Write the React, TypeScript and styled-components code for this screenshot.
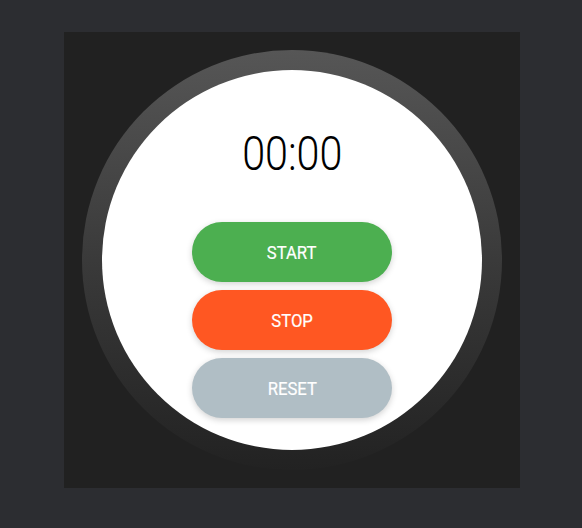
import React from "react";
import styled, { createGlobalStyle } from "styled-components";

const Global = createGlobalStyle`
  html, body { margin: 0; padding: 0; background: #2c2d31; }
  body { font-family: Roboto, "Liberation Sans", sans-serif; }
`;

const Page = styled.div`
  width: 582px;
  height: 528px;
  padding: 32px 0 0 64px;
  box-sizing: border-box;
`;

const Stage = styled.div`
  width: 456px;
  height: 456px;
  background: #212121;
  display: flex;
  align-items: center;
  justify-content: center;
`;

const Ring = styled.div`
  width: 420px;
  height: 420px;
  border-radius: 50%;
  background: linear-gradient(to bottom, #565656 0%, #3a3a3a 50%, #222222 100%);
  display: flex;
  align-items: center;
  justify-content: center;
`;

const Face = styled.div`
  width: 380px;
  height: 380px;
  border-radius: 50%;
  background: #ffffff;
  display: flex;
  flex-direction: column;
  align-items: center;
  box-sizing: border-box;
  padding-top: 56px;
`;

const Time = styled.div`
  font-family: Roboto, sans-serif;
  font-weight: 300;
  font-size: 48px;
  line-height: 56px;
  color: #000;
  transform: scaleX(0.86);
  margin-bottom: 40px;
`;

const Buttons = styled.div`
  display: flex;
  flex-direction: column;
  gap: 8px;
`;

const Btn = styled.button<{ $bg: string }>`
  width: 200px;
  height: 60px;
  border: none;
  border-radius: 30px;
  background: ${(p) => p.$bg};
  color: #fff;
  font-family: Roboto, sans-serif;
  font-size: 18.5px;
  font-weight: 400;
  box-shadow: 0 2px 6px rgba(0, 0, 0, 0.18);
  display: flex;
  align-items: center;
  justify-content: center;
  cursor: pointer;
  padding: 2px 0 0 0;
  box-sizing: border-box;
`;

const Label = styled.span`
  display: inline-block;
  transform: scaleX(0.9);
  -webkit-text-stroke: 0.2px #fff;
`;

export default function App() {
  return (
    <>
      <Global />
      <Page>
        <Stage>
          <Ring>
            <Face>
              <Time>00:00</Time>
              <Buttons>
                <Btn $bg="#4caf50"><Label>START</Label></Btn>
                <Btn $bg="#ff5722"><Label>STOP</Label></Btn>
                <Btn $bg="#b0bec5"><Label>RESET</Label></Btn>
              </Buttons>
            </Face>
          </Ring>
        </Stage>
      </Page>
    </>
  );
}
